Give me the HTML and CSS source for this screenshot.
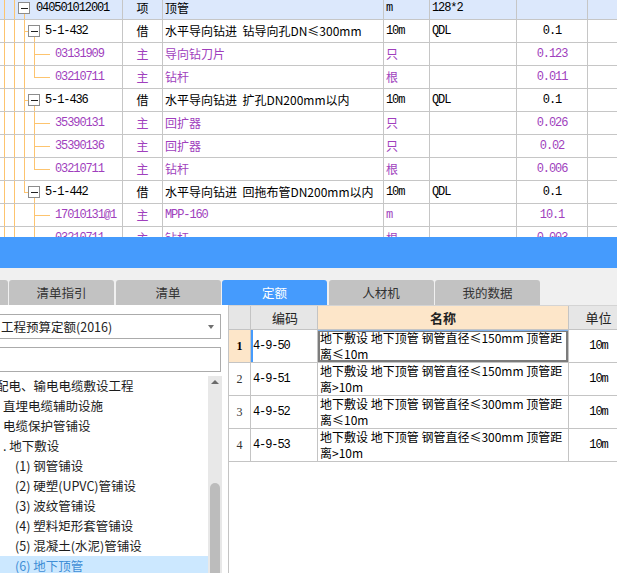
FILE: index.html
```html
<!DOCTYPE html>
<html lang="zh-CN">
<head>
<meta charset="utf-8">
<title>定额</title>
<link rel="stylesheet" href="styles.css">
</head>
<body>
<div class="top">
  <div class="grid">
    <div class="row sel">
      <div class="c code"><svg class="tree" width="36" height="22"><path class="ln" d="M4.5 0V22M14.5 0V22M24.5 17V22"/><rect class="bx" x="18.5" y="5.5" width="11" height="11"/><path class="mn" d="M21 11.5H28"/></svg><span class="mono">040501012001</span></div>
      <div class="c type">项</div>
      <div class="c name">顶管</div>
      <div class="c unit"><span class="mono">m</span></div>
      <div class="c expr"><span class="mono">128*2</span></div>
      <div class="c qty"></div>
      <div class="c last"></div>
    </div>
    <div class="row">
      <div class="c code"><svg class="tree" width="45" height="22"><path class="ln" d="M4.5 0V22M14.5 0V22M24.5 0V22M24 11.5H28M34.5 17V22"/><rect class="bx" x="28.5" y="5.5" width="11" height="11"/><path class="mn" d="M31 11.5H38"/></svg><span class="mono">5-1-432</span></div>
      <div class="c type">借</div>
      <div class="c name">水平导向钻进&nbsp; 钻导向孔DN≤300mm</div>
      <div class="c unit"><span class="mono">10m</span></div>
      <div class="c expr"><span class="mono">QDL</span></div>
      <div class="c qty"><span class="mono">0.1</span></div>
      <div class="c last"></div>
    </div>
    <div class="row sub">
      <div class="c code"><svg class="tree" width="55" height="22"><path class="ln" d="M4.5 0V22M14.5 0V22M24.5 0V22M34.5 0V22M34 11.5H50"/></svg><span class="mono">03131909</span></div>
      <div class="c type">主</div>
      <div class="c name">导向钻刀片</div>
      <div class="c unit">只</div>
      <div class="c expr"></div>
      <div class="c qty"><span class="mono">0.123</span></div>
      <div class="c last"></div>
    </div>
    <div class="row sub">
      <div class="c code"><svg class="tree" width="55" height="22"><path class="ln" d="M4.5 0V22M14.5 0V22M24.5 0V22M34.5 0V11.5M34 11.5H50"/></svg><span class="mono">03210711</span></div>
      <div class="c type">主</div>
      <div class="c name">钻杆</div>
      <div class="c unit">根</div>
      <div class="c expr"></div>
      <div class="c qty"><span class="mono">0.011</span></div>
      <div class="c last"></div>
    </div>
    <div class="row">
      <div class="c code"><svg class="tree" width="45" height="22"><path class="ln" d="M4.5 0V22M14.5 0V22M24.5 0V22M24 11.5H28M34.5 17V22"/><rect class="bx" x="28.5" y="5.5" width="11" height="11"/><path class="mn" d="M31 11.5H38"/></svg><span class="mono">5-1-436</span></div>
      <div class="c type">借</div>
      <div class="c name">水平导向钻进&nbsp; 扩孔DN200mm以内</div>
      <div class="c unit"><span class="mono">10m</span></div>
      <div class="c expr"><span class="mono">QDL</span></div>
      <div class="c qty"><span class="mono">0.1</span></div>
      <div class="c last"></div>
    </div>
    <div class="row sub">
      <div class="c code"><svg class="tree" width="55" height="22"><path class="ln" d="M4.5 0V22M14.5 0V22M24.5 0V22M34.5 0V22M34 11.5H50"/></svg><span class="mono">35390131</span></div>
      <div class="c type">主</div>
      <div class="c name">回扩器</div>
      <div class="c unit">只</div>
      <div class="c expr"></div>
      <div class="c qty"><span class="mono">0.026</span></div>
      <div class="c last"></div>
    </div>
    <div class="row sub">
      <div class="c code"><svg class="tree" width="55" height="22"><path class="ln" d="M4.5 0V22M14.5 0V22M24.5 0V22M34.5 0V22M34 11.5H50"/></svg><span class="mono">35390136</span></div>
      <div class="c type">主</div>
      <div class="c name">回扩器</div>
      <div class="c unit">只</div>
      <div class="c expr"></div>
      <div class="c qty"><span class="mono">0.02</span></div>
      <div class="c last"></div>
    </div>
    <div class="row sub">
      <div class="c code"><svg class="tree" width="55" height="22"><path class="ln" d="M4.5 0V22M14.5 0V22M24.5 0V22M34.5 0V11.5M34 11.5H50"/></svg><span class="mono">03210711</span></div>
      <div class="c type">主</div>
      <div class="c name">钻杆</div>
      <div class="c unit">根</div>
      <div class="c expr"></div>
      <div class="c qty"><span class="mono">0.006</span></div>
      <div class="c last"></div>
    </div>
    <div class="row">
      <div class="c code"><svg class="tree" width="45" height="22"><path class="ln" d="M4.5 0V22M14.5 0V22M24.5 0V11.5M24 11.5H28M34.5 17V22"/><rect class="bx" x="28.5" y="5.5" width="11" height="11"/><path class="mn" d="M31 11.5H38"/></svg><span class="mono">5-1-442</span></div>
      <div class="c type">借</div>
      <div class="c name">水平导向钻进&nbsp; 回拖布管DN200mm以内</div>
      <div class="c unit"><span class="mono">10m</span></div>
      <div class="c expr"><span class="mono">QDL</span></div>
      <div class="c qty"><span class="mono">0.1</span></div>
      <div class="c last"></div>
    </div>
    <div class="row sub">
      <div class="c code"><svg class="tree" width="55" height="22"><path class="ln" d="M4.5 0V22M14.5 0V22M34.5 0V22M34 11.5H50"/></svg><span class="mono">17010131@1</span></div>
      <div class="c type">主</div>
      <div class="c name"><span class="mono">MPP-160</span></div>
      <div class="c unit"><span class="mono">m</span></div>
      <div class="c expr"></div>
      <div class="c qty"><span class="mono">10.1</span></div>
      <div class="c last"></div>
    </div>
    <div class="row sub">
      <div class="c code"><svg class="tree" width="55" height="22"><path class="ln" d="M4.5 0V22M14.5 0V22M34.5 0V11.5M34 11.5H50"/></svg><span class="mono">03210711</span></div>
      <div class="c type">主</div>
      <div class="c name">钻杆</div>
      <div class="c unit">根</div>
      <div class="c expr"></div>
      <div class="c qty"><span class="mono">0.003</span></div>
      <div class="c last"></div>
    </div>
  </div>
</div>

<div class="bluebar"></div>

<div class="tabbar">
  <div class="tab"></div>
  <div class="tab">清单指引</div>
  <div class="tab">清单</div>
  <div class="tab active">定额</div>
  <div class="tab">人材机</div>
  <div class="tab">我的数据</div>
</div>

<div class="bottom">
  <div class="left">
    <div class="select"><span class="seltext">工程预算定额(2016)</span><span class="arrow"></span></div>
    <div class="search"></div>
    <div class="listwrap">
      <ul class="list">
        <li class="l0">配电、输电电缆敷设工程</li>
        <li class="l1">直埋电缆辅助设施</li>
        <li class="l1">电缆保护管铺设</li>
        <li class="l1">. 地下敷设</li>
        <li class="l2">(1) 钢管铺设</li>
        <li class="l2">(2) 硬塑(UPVC)管铺设</li>
        <li class="l2">(3) 波纹管铺设</li>
        <li class="l2">(4) 塑料矩形套管铺设</li>
        <li class="l2">(5) 混凝土(水泥)管铺设</li>
        <li class="l2 on">(6) 地下顶管</li>
      </ul>
      <div class="scroll"><span class="up"></span><span class="thumb"></span></div>
    </div>
  </div>

  <div class="table">
    <div class="trow thead">
      <div class="t num"></div>
      <div class="t tc">编码</div>
      <div class="t tn">名称</div>
      <div class="t tu">单位</div>
    </div>
    <div class="trow cur">
      <div class="t num">1</div>
      <div class="t tc"><span class="mono">4-9-50</span></div>
      <div class="t tn"><span class="ln1">地下敷设 地下顶管 钢管直径≤150mm 顶管距</span><span class="ln2">离≤10m</span></div>
      <div class="t tu"><span class="mono">10m</span></div>
    </div>
    <div class="trow">
      <div class="t num">2</div>
      <div class="t tc"><span class="mono">4-9-51</span></div>
      <div class="t tn"><span class="ln1">地下敷设 地下顶管 钢管直径≤150mm 顶管距</span><span class="ln2">离&gt;10m</span></div>
      <div class="t tu"><span class="mono">10m</span></div>
    </div>
    <div class="trow">
      <div class="t num">3</div>
      <div class="t tc"><span class="mono">4-9-52</span></div>
      <div class="t tn"><span class="ln1">地下敷设 地下顶管 钢管直径≤300mm 顶管距</span><span class="ln2">离≤10m</span></div>
      <div class="t tu"><span class="mono">10m</span></div>
    </div>
    <div class="trow">
      <div class="t num">4</div>
      <div class="t tc"><span class="mono">4-9-53</span></div>
      <div class="t tn"><span class="ln1">地下敷设 地下顶管 钢管直径≤300mm 顶管距</span><span class="ln2">离&gt;10m</span></div>
      <div class="t tu"><span class="mono">10m</span></div>
    </div>
  </div>
</div>
</body>
</html>
```

FILE: styles.css
```css
* { box-sizing: border-box; }
html, body { margin: 0; padding: 0; overflow: hidden; background: #fff; }
body {
  width: 617px;
  height: 573px;
  font-family: "Noto Sans CJK SC", "Noto Sans", sans-serif;
  font-size: 12px;
  color: #000;
}
.mono {
  font-family: "Liberation Mono", "Noto Sans CJK SC", monospace;
  font-size: 12px;
  letter-spacing: -1.1px;
}

/* top grid */
.top { height: 237px; overflow: hidden; }
.grid { margin-top: -3px; width: 640px; }
.row {
  display: grid;
  grid-template-columns: 123px 40px 221px 46px 87px 71px 52px;
  height: 23px;
}
.row.sel { background: #dce8fc; }
.row.sub { color: #a03fbd; }
.c {
  border-right: 1px solid #c6c6c6;
  border-bottom: 1px solid #c6c6c6;
  display: flex;
  align-items: center;
  white-space: nowrap;
  overflow: hidden;
  padding: 0 2px;
  line-height: 22px;
}
.c.code { padding: 0; }
.c.type { justify-content: center; padding: 0; }
.c.qty { justify-content: center; }
.tree { flex: none; display: block; align-self: stretch; }
.tree .ln { stroke: #fdc46f; stroke-width: 1; fill: none; }
.tree .bx { stroke: #8c8c8c; stroke-width: 1; fill: #fff; }
.tree .mn { stroke: #222; stroke-width: 1; fill: none; }

/* blue bar + tabs */
.bluebar { height: 31px; background: #459bfd; }
.tabbar {
  height: 37px;
  background: #f0f0f0;
  padding-top: 12px;
  display: flex;
  gap: 1.5px;
  overflow: hidden;
}
.tab {
  flex: none;
  width: 105px;
  height: 25px;
  background: #c2c2c2;
  border-radius: 3px 3px 0 0;
  display: flex;
  align-items: center;
  justify-content: center;
  font-size: 12.5px;
  color: #333;
}
.tab:first-child { margin-left: -97.5px; }
.tab.active { background: #459bfd; color: #fff; }

/* bottom */
.bottom { display: flex; height: 268px; background: #fff; }
.left { flex: none; width: 222px; overflow: hidden; padding-top: 9px; }
.select {
  margin-left: -10px;
  width: 231px;
  height: 25px;
  border: 1px solid #ababab;
  background: #fff;
  display: flex;
  align-items: center;
  justify-content: space-between;
  padding: 0 6px 0 10px;
  font-size: 12.5px;
  color: #222;
  white-space: nowrap;
}
.arrow {
  width: 0;
  height: 0;
  border-left: 3px solid transparent;
  border-right: 3px solid transparent;
  border-top: 4px solid #707070;
}
.search {
  margin: 8px 0 4px -10px;
  width: 231px;
  height: 25px;
  border: 1px solid #ababab;
  background: #fff;
}
.listwrap { display: flex; height: 197px; }
.list {
  flex: none;
  width: 208px;
  margin: 0;
  padding: 0;
  list-style: none;
  overflow: hidden;
}
.list li {
  height: 20px;
  line-height: 20px;
  white-space: nowrap;
  font-size: 12.5px;
  color: #1c1c1c;
}
.list .l0 { text-indent: -4px; }
.list .l1 { padding-left: 3px; }
.list .l2 { padding-left: 15px; }
.list .on { background: #cce8ff; color: #3f8ed6; }
.scroll {
  flex: none;
  width: 14px;
  background: #e8e8e8;
  display: flex;
  flex-direction: column;
  align-items: center;
}
.up {
  margin-top: 4px;
  width: 0;
  height: 0;
  border-left: 4px solid transparent;
  border-right: 4px solid transparent;
  border-bottom: 4px solid #6a6a6a;
}
.thumb {
  margin-top: auto;
  width: 10px;
  height: 90px;
  background: #bcbcbc;
  border-radius: 5px 5px 0 0;
}

/* right table */
.table {
  flex: 1;
  margin-left: 6px;
  border-left: 1px solid #c4c4c4;
  border-top: 1px solid #d4d4d4;
  overflow: hidden;
}
.trow {
  display: grid;
  grid-template-columns: 22px 67px 251px 60px;
  height: 33px;
  width: 400px;
}
.trow.thead { height: 24px; }
.t {
  border-right: 1px solid #c4c4c4;
  border-bottom: 1px solid #c4c4c4;
  overflow: hidden;
  white-space: nowrap;
}
.thead .t {
  background: #e6e6e6;
  display: flex;
  align-items: center;
  justify-content: center;
  font-size: 13px;
  color: #222;
}
.thead .tn { background: #fde6c9; font-weight: bold; }
.num {
  display: flex;
  align-items: center;
  justify-content: center;
  font-family: "Liberation Serif", serif;
  font-size: 12px;
  color: #333;
}
.tc { display: flex; align-items: center; padding-left: 2px; }
.tn {
  display: flex;
  flex-direction: column;
  padding: 0 2px;
  font-size: 12px;
}
.tn .ln1, .tn .ln2 { display: block; height: 16px; line-height: 16px; }
.tu { display: flex; align-items: center; justify-content: center; }
.cur .num { background: #fde6c9; font-weight: bold; color: #000; }
.cur .tc { box-shadow: inset 2px 0 0 #459bfd; }
.cur .tn { box-shadow: inset 0 1px 0 #7fb2ee, inset 0 0 0 2px #7c7c7c; }
```
